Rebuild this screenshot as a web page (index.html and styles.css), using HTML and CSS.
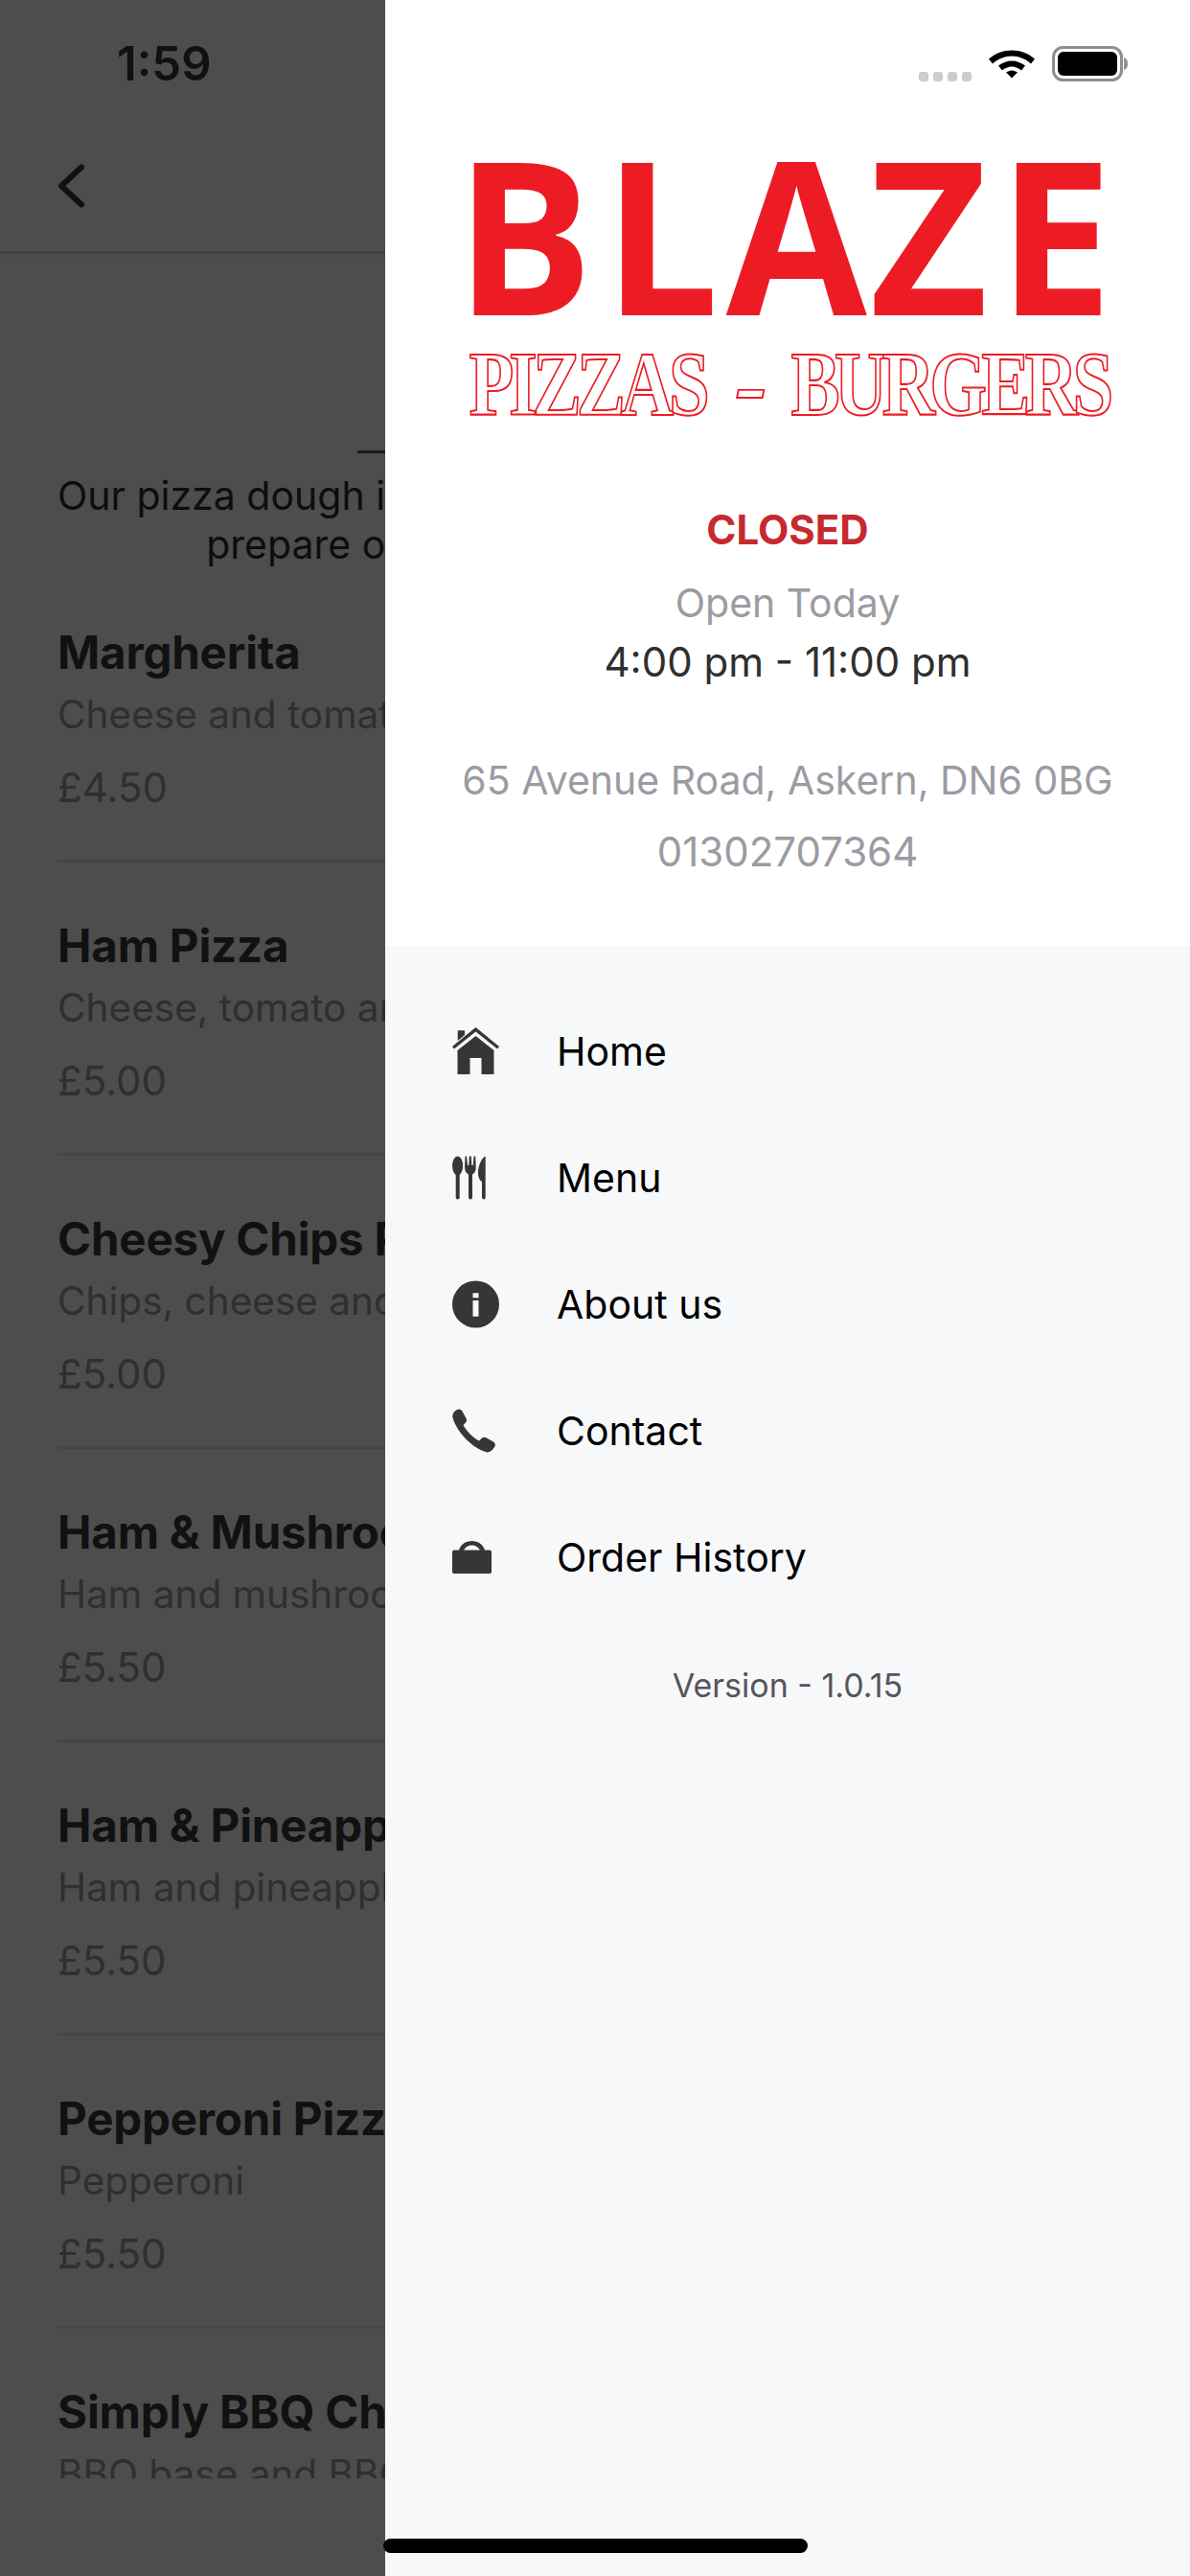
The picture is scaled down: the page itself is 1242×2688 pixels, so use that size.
FILE: index.html
```html
<!DOCTYPE html>
<html lang="en">
  <head>
    <meta charset="UTF-8" />
    <title>Blaze Pizzas - Burgers</title>
    <link rel="stylesheet" href="styles.css">
  </head>
  <body>
    <div class="screen">
      <div class="behind">
        <div class="behind-inner">
          <div class="status-time">1:59</div>
          <div class="topbar">
            <svg class="back" width="30" height="46" viewBox="0 0 30 46"><path d="M25 3.500 4 23l21 19.500" fill="none" stroke="#111" stroke-width="6" stroke-linecap="round" stroke-linejoin="round"/></svg>
          </div>
          <div class="intro">
            <div class="intro-rule"></div>
            <p>Our pizza dough is freshly made on site every day and we<br>prepare our toppings to order every night.</p>
          </div>
          <div class="list">
            <div class="item">
              <h3>Margherita</h3>
              <p>Cheese and tomato</p>
              <span>£4.50</span>
            </div>
            <div class="item">
              <h3>Ham Pizza</h3>
              <p>Cheese, tomato and ham</p>
              <span>£5.00</span>
            </div>
            <div class="item">
              <h3>Cheesy Chips Pizza</h3>
              <p>Chips, cheese and tomato</p>
              <span>£5.00</span>
            </div>
            <div class="item">
              <h3>Ham &amp; Mushroom</h3>
              <p>Ham and mushroom</p>
              <span>£5.50</span>
            </div>
            <div class="item">
              <h3>Ham &amp; Pineapple</h3>
              <p>Ham and pineapple</p>
              <span>£5.50</span>
            </div>
            <div class="item">
              <h3>Pepperoni Pizza</h3>
              <p>Pepperoni</p>
              <span>£5.50</span>
            </div>
            <div class="item">
              <h3>Simply BBQ Chicken</h3>
              <p>BBQ base and BBQ chicken</p>
            </div>
          </div>
        </div>
      </div>

      <div class="drawer">
        <div class="drawer-top">
          <div class="status-icons">
            <div class="signal"><i></i><i></i><i></i><i></i></div>
            <svg width="50" height="36" viewBox="0 7 50 29"><path d="M25 7C16 7 8 10 1 16l4 5c5-5 13-8 20-8s15 3 20 8l4-5C42 10 34 7 25 7Z"/><path d="M25 18c-5 0-10 2-14 5l4 5c2-2 7-4 10-4s8 2 10 4l4-5c-4-3-9-5-14-5Z"/><path d="M25 28c-2 0-4 1-6 2l6 6 6-6c-2-1-4-2-6-2Z"/></svg>
            <svg width="80" height="37" viewBox="0 0 80 37"><rect x="1.500" y="1.500" width="71" height="34" rx="10" fill="none" stroke="#8e8e8e" stroke-width="3"/><rect x="6" y="6" width="62" height="25" rx="6"/><path d="M75 12c3 1 4 3 4 6.500s-1 5.500-4 6.500Z" fill="#8e8e8e"/></svg>
          </div>
          <svg class="logo" width="690" height="300" viewBox="0 0 690 300">
            <g transform="scale(0.96 1)">
              <text class="logo-main" x="-12 149 282 438 578" y="183">BLAZE</text>
            </g>
            <g transform="scale(0.8 1)">
              <text class="logo-sub" x="3" y="287" textLength="314">PIZZAS</text>
              <text class="logo-sub" x="423" y="287" textLength="421">BURGERS</text>
            </g>
            <text class="logo-sub logo-dash" x="280" y="287" textLength="34" lengthAdjust="spacingAndGlyphs">-</text>
          </svg>
          <div class="state">CLOSED</div>
          <div class="open-label">Open Today</div>
          <div class="open-hours">4:00 pm - 11:00 pm</div>
          <div class="address">65 Avenue Road, Askern, DN6 0BG</div>
          <div class="phone">01302707364</div>
        </div>
        <div class="menu">
          <div class="menu-row">
            <svg class="menu-icon" width="50" height="50" viewBox="0 0 50 50"><path d="M24.500 0 49 20l-2 2.500L24.500 4.500 2 22.500 0 20Z"/><path d="M5.700 3.300H13V8l-7.300 6ZM24.500 9 43.500 24v25H30.500V32h-12v17H5.500V24Z"/></svg>
            <span>Home</span>
          </div>
          <div class="menu-row">
            <svg class="menu-icon" width="50" height="50" viewBox="0 0 50 50"><ellipse cx="5.600" cy="12.500" rx="5.600" ry="10"/><rect x="3.700" y="18" width="4" height="29.500" rx="2"/><path d="M13.500 2.500H15l1 9.500h1.300l.5-9.500h2l.5 9.500h1.300l1-9.500h1.600l.5 11.500c0 4-1.700 6.500-3.700 7.500v24a2 2 0 0 1-4 0v-24c-2-1-4-3.500-4-7.500Z"/><path d="M34.700 2.500v43a1.850 2 0 0 1-3.700 0V29c-2-1-4-4-4-9 0-8 4-16 7.700-17.500Z"/></svg>
            <span>Menu</span>
          </div>
          <div class="menu-row">
            <svg class="menu-icon" width="50" height="50" viewBox="0 0 50 50"><path fill-rule="evenodd" d="M24.500.500a24.500 24.500 0 1 1 0 49 24.500 24.500 0 0 1 0-49Zm-3 12.800v5h6v-5Zm0 7.700v16.700h6V21Z"/></svg>
            <span>About us</span>
          </div>
          <div class="menu-row">
            <svg class="menu-icon" width="50" height="50" viewBox="0 0 50 50"><path transform="translate(0 2.500)" d="M.5 9C-.5 5 3 0 7 0c2 0 3 1 4 3l3.500 6.500c1 2 .5 3.500-1 5l-2 2C15 23 21 29 28 33l2.500-2.500c1.500-1.500 3.500-1.700 5.500-.5l7 4c2 1.500 2.500 3.500 1 5.500-2 3-4.500 5.500-7.500 5.500C21 41 5 24 .5 9Z"/></svg>
            <span>Contact</span>
          </div>
          <div class="menu-row">
            <svg class="menu-icon" width="50" height="50" viewBox="0 0 50 50"><g transform="translate(0 8)"><rect y="9.500" width="41" height="24.500" rx="2"/><path fill-rule="evenodd" d="M7 10C8 4 14 0 20.500 0S33 4 34 10ZM12 10h17C28 7 25 4.500 20.500 4.500S13 7 12 10Z"/></g></svg>
            <span>Order History</span>
          </div>
          <div class="version">Version - 1.0.15</div>
        </div>
      </div>

      <div class="home-bar"></div>
    </div>
  </body>
</html>
```

FILE: styles.css
```css
* {
  box-sizing: border-box;
}
html,
body {
  margin: 0;
  padding: 0;
}
body {
  font-family: Inter, "Liberation Sans", sans-serif;
}
.screen {
  position: relative;
  display: flex;
  width: 1242px;
  height: 2688px;
  overflow: hidden;
  background-color: #4d4d4d;
}

/* page dimmed behind the drawer */
.behind {
  flex-shrink: 0;
  width: 402px;
  height: 100%;
  overflow: hidden;
}
.behind-inner {
  width: 1242px;
}
.status-time {
  height: 104px;
  padding: 43px 0 0 122px;
  font-size: 49px;
  font-weight: 600;
  line-height: 48px;
  color: #111;
}
.topbar {
  height: 160px;
  padding: 67px 0 0 60px;
  border-bottom: 2px solid #404040;
  box-shadow: 0 2px 3px rgba(0, 0, 0, 0.1);
}
.intro {
  padding-top: 206px;
}
.intro-rule {
  width: 496px;
  height: 3px;
  margin: 0 auto;
  background-color: #1c1c1c;
}
.intro p {
  margin: 19px 0 0;
  font-size: 41px;
  line-height: 51px;
  text-align: center;
  color: #0d0d0d;
  white-space: nowrap;
}
.list {
  height: 1992px;
  padding: 0 60px;
  overflow: hidden;
}
.item {
  height: 306px;
  padding-top: 59px;
  border-bottom: 3px solid #454545;
  white-space: nowrap;
}
.item h3 {
  margin: 0;
  font-size: 47.5px;
  font-weight: 700;
  line-height: 56px;
  letter-spacing: -0.2px;
  color: #111;
}
.item p {
  margin: 12px 0 0;
  font-size: 40.5px;
  line-height: 50px;
  color: #2f2f2f;
}
.item span {
  display: block;
  margin-top: 26px;
  font-size: 42px;
  line-height: 50px;
  color: #2f2f2f;
}

/* drawer */
.drawer {
  display: flex;
  flex: 1;
  flex-direction: column;
  background-color: #f7f8fa;
}
.drawer-top {
  height: 987px;
  padding-top: 49px;
  text-align: center;
  background-color: #fff;
}
.status-icons {
  display: flex;
  align-items: flex-end;
  justify-content: flex-end;
  gap: 17px;
  height: 36px;
  padding-right: 64px;
}
.signal {
  display: flex;
  gap: 5px;
}
.signal i {
  display: block;
  width: 10px;
  height: 10px;
  border-radius: 3px;
  background-color: #cdcdcd;
}
.logo {
  display: block;
  margin: 61px 0 0 85px;
}
.logo-main {
  font-family: "Open Sans", sans-serif;
  font-size: 222px;
  font-weight: 700;
  fill: #ed1c24;
}
.logo-sub {
  font-family: "Liberation Serif", serif;
  font-size: 96px;
  font-weight: 700;
  fill: #fff;
  stroke: #ed1c24;
  stroke-width: 2px;
}
.logo-dash {
  font-style: italic;
  stroke-width: 1.8px;
}
.state {
  margin-top: 82px;
  font-size: 42px;
  font-weight: 700;
  line-height: 50px;
  color: #c62a2f;
}
.open-label {
  margin-top: 26px;
  font-size: 41px;
  line-height: 50px;
  color: #9b9ba3;
}
.open-hours {
  margin-top: 12px;
  font-size: 42px;
  line-height: 50px;
  color: #2f2f2f;
}
.address {
  margin-top: 73px;
  font-size: 41px;
  line-height: 50px;
  color: #9b9ba3;
}
.phone {
  margin-top: 25px;
  font-size: 42px;
  line-height: 50px;
  color: #9b9ba3;
}
.menu {
  padding: 44px 0 0 70px;
}
.menu-row {
  display: flex;
  align-items: center;
  gap: 59px;
  height: 132px;
  font-size: 41px;
  color: #000;
}
.menu-icon {
  flex-shrink: 0;
  fill: #363636;
}
.version {
  margin: 48px 0 0 -70px;
  font-size: 34px;
  line-height: 40px;
  text-align: center;
  color: #55555c;
}
.home-bar {
  position: absolute;
  left: 400px;
  top: 2649px;
  width: 443px;
  height: 15px;
  border-radius: 8px;
  background-color: #000;
}
```
